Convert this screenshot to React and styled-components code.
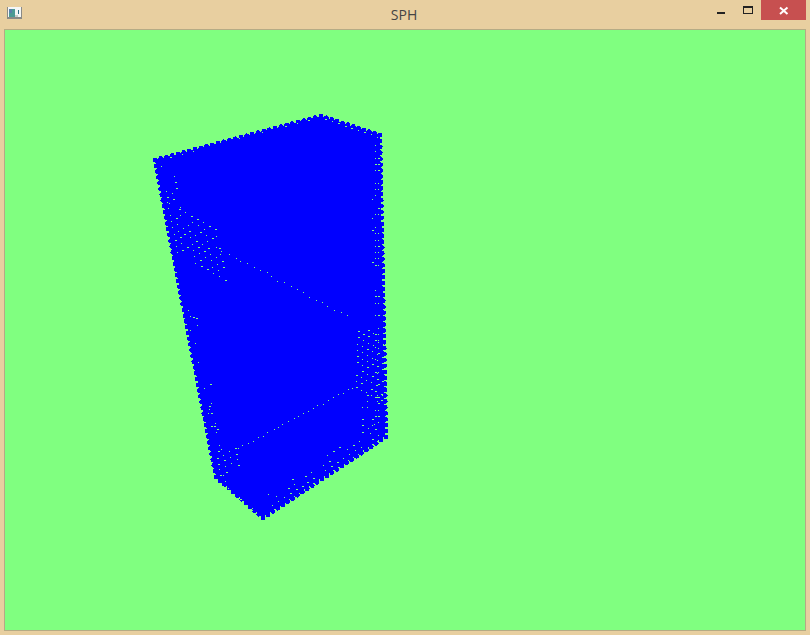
import { createGlobalStyle } from "styled-components";
import styled from "styled-components";

const GlobalStyle = createGlobalStyle`
    html, body {
        margin: 0;
        padding: 0;
        background: #e8cfa0;
        overflow: hidden;
    }
`

const WINDOW = styled.div`
    width: 810px;
    height: 635px;
    box-sizing: border-box;
    display: flex;
    flex-direction: column;
    padding: 0 4px 4px;
    background: #e8cfa0;
`

const TITLEBAR = styled.div`
    height: 29px;
    flex: none;
    display: grid;
    grid-template-columns: 1fr auto 1fr;
    align-items: start;
`

const TITLE = styled.div`
    font-family: "Open Sans", "Liberation Sans", sans-serif;
    font-size: 14px;
    line-height: 29px;
    color: #444444;
    transform: translateX(-1px);
`

const APPICON = styled.svg`
    display: block;
    margin: 7px 0 0 3px;
`

const CONTROLS = styled.div`
    display: flex;
    justify-content: flex-end;
`

const CONTROL = styled.div`
    width: ${(props) => props.width}px;
    height: 20px;
    display: flex;
    align-items: flex-start;
    justify-content: center;
    background: ${(props) => props.background || "transparent"};
`

const CANVAS = styled.div`
    flex: 1;
    min-height: 0;
    border: 1px solid #b5ab85;
    background: #80ff80;
`

const SCENE = styled.svg`
    display: block;
    width: 800px;
    height: 600px;
`

const BLUE = "#0000ff"
const GREEN = "#80ff80"

const OUTLINE = [[155, 160], [321, 116], [380, 135], [386, 437], [263, 518], [216, 477]]
const BODY = [[155, 160], [321, 116], [380, 135], [385, 436], [263, 517], [216, 477]]

function random(seed) {
    let s = seed
    return () => {
        s = (s * 16807) % 2147483647
        return s / 2147483647
    }
}

// particles along the silhouette of the block
function edgeDots() {
    const dots = []
    OUTLINE.forEach((a, i) => {
        const b = OUTLINE[(i + 1) % OUTLINE.length]
        const len = Math.hypot(b[0] - a[0], b[1] - a[1])
        const n = Math.round(len / 5.9)
        for (let k = 0; k < n; k++) {
            dots.push([a[0] + (b[0] - a[0]) * k / n, a[1] + (b[1] - a[1]) * k / n])
        }
    })
    return dots
}

function lattice(origin, u, v, nu, nv, keep, rnd) {
    const out = []
    for (let i = 0; i < nu; i++) {
        for (let j = 0; j < nv; j++) {
            if (rnd() < keep(i / nu, j / nv)) {
                out.push([
                    Math.round(origin[0] + u[0] * i + v[0] * j),
                    Math.round(origin[1] + u[1] * i + v[1] * j),
                    rnd() < 0.35 ? 2 : 1
                ])
            }
        }
    }
    return out
}

function line(a, b, n, rnd) {
    const out = []
    for (let k = 0; k < n; k++) {
        const t = k / n
        out.push([
            Math.round(a[0] + (b[0] - a[0]) * t + rnd() * 2),
            Math.round(a[1] + (b[1] - a[1]) * t + rnd() * 2),
            1
        ])
    }
    return out
}

function gapDots() {
    const rnd = random(4711)
    return [
        // left face fringe
        ...lattice([161, 166], [5.7, 1.7], [1.25, 6.2], 3, 7, () => 0.6, rnd),
        ...lattice([167, 202], [6, 3.4], [1.3, 6.3], 9, 9, (i) => 0.95 - i * 0.35, rnd),
        ...lattice([180, 270], [3, 1], [1.4, 6.6], 3, 50, () => 0.14, rnd),
        // top edge fringe
        ...lattice([170, 157], [11.5, -3.1], [0, 3], 13, 1, () => 0.7, rnd),
        ...lattice([325, 119], [6.5, 2.2], [0, 3], 9, 1, () => 0.8, rnd),
        // thin seams crossing the faces
        ...line([215, 246], [352, 318], 22, rnd),
        ...line([352, 386], [232, 450], 24, rnd),
        // right face columns
        ...lattice([378, 145], [0, 6.3], [-3, 0], 46, 2, () => 0.6, rnd),
        ...lattice([372, 180], [0, 6.3], [-4, 0.4], 20, 1, () => 0.12, rnd),
        ...lattice([358, 325], [5, 2.6], [-0.2, 6.2], 6, 11, () => 0.85, rnd),
        ...lattice([362, 395], [5, 0], [0, 6], 5, 6, () => 0.4, rnd),
        // bottom faces
        ...lattice([217, 458], [6, -3.3], [1, 5.6], 4, 4, () => 0.85, rnd),
        ...lattice([222, 483], [6, 5.4], [0, 5], 7, 1, () => 0.6, rnd),
        ...lattice([272, 505], [5.9, -3.9], [-2, -5.4], 19, 3, (i, j) => 0.9 - j * 0.7, rnd),
        ...lattice([205, 400], [1.6, 6.4], [2.5, 0], 11, 2, () => 0.4, rnd),
        ...lattice([190, 330], [1.5, 6.4], [-1.5, 0], 11, 1, () => 0.3, rnd)
    ]
}

const EDGE_DOTS = edgeDots()
const GAP_DOTS = gapDots()

function App() {
    return (
        <WINDOW>
            <GlobalStyle />
            <TITLEBAR>
                <APPICON width = "15" height = "12" viewBox = "0 0 15 12">
                    <rect x = "0" y = "0" width = "15" height = "12" fill = "#8a8a86" />
                    <rect x = "1" y = "0" width = "13" height = "10" fill = "#f4f6f6" />
                    <rect x = "2" y = "2" width = "6" height = "8" fill = "#4c9a94" />
                    <rect x = "2" y = "2" width = "3" height = "4" fill = "#5a7fa8" />
                    <rect x = "11" y = "3" width = "1" height = "4" fill = "#2c6f86" />
                    <rect x = "8" y = "8" width = "3" height = "2" fill = "#c8ccc8" />
                </APPICON>
                <TITLE>SPH</TITLE>
                <CONTROLS>
                    <CONTROL width = "26">
                        <svg width = "26" height = "20" viewBox = "0 0 26 20">
                            <rect x = "9" y = "12" width = "8" height = "2" fill = "#222222" />
                        </svg>
                    </CONTROL>
                    <CONTROL width = "27">
                        <svg width = "27" height = "20" viewBox = "0 0 27 20">
                            <rect x = "9.5" y = "6.5" width = "9" height = "7" fill = "none" stroke = "#222222" />
                            <rect x = "9" y = "6" width = "10" height = "2" fill = "#222222" />
                        </svg>
                    </CONTROL>
                    <CONTROL width = "45" background = "#c75050">
                        <svg width = "45" height = "20" viewBox = "0 0 45 20">
                            <path d = "M19 7.5 L26.5 14 M26.5 7.5 L19 14" stroke = "#ffffff" strokeWidth = "2" fill = "none" />
                        </svg>
                    </CONTROL>
                </CONTROLS>
            </TITLEBAR>
            <CANVAS>
                <SCENE viewBox = "5 30 800 600">
                    <polygon points = {BODY.map((p) => p.join(",")).join(" ")} fill = {BLUE} shapeRendering = "crispEdges" />
                    {EDGE_DOTS.map((d, i) => (
                        <circle key = {i} cx = {d[0]} cy = {d[1]} r = "2.4" fill = {BLUE} shapeRendering = "crispEdges" />
                    ))}
                    {GAP_DOTS.map((d, i) => (
                        <rect key = {i} x = {d[0]} y = {d[1]} width = {d[2]} height = "1" fill = {GREEN} shapeRendering = "crispEdges" />
                    ))}
                </SCENE>
            </CANVAS>
        </WINDOW>
    )
}

export default App
